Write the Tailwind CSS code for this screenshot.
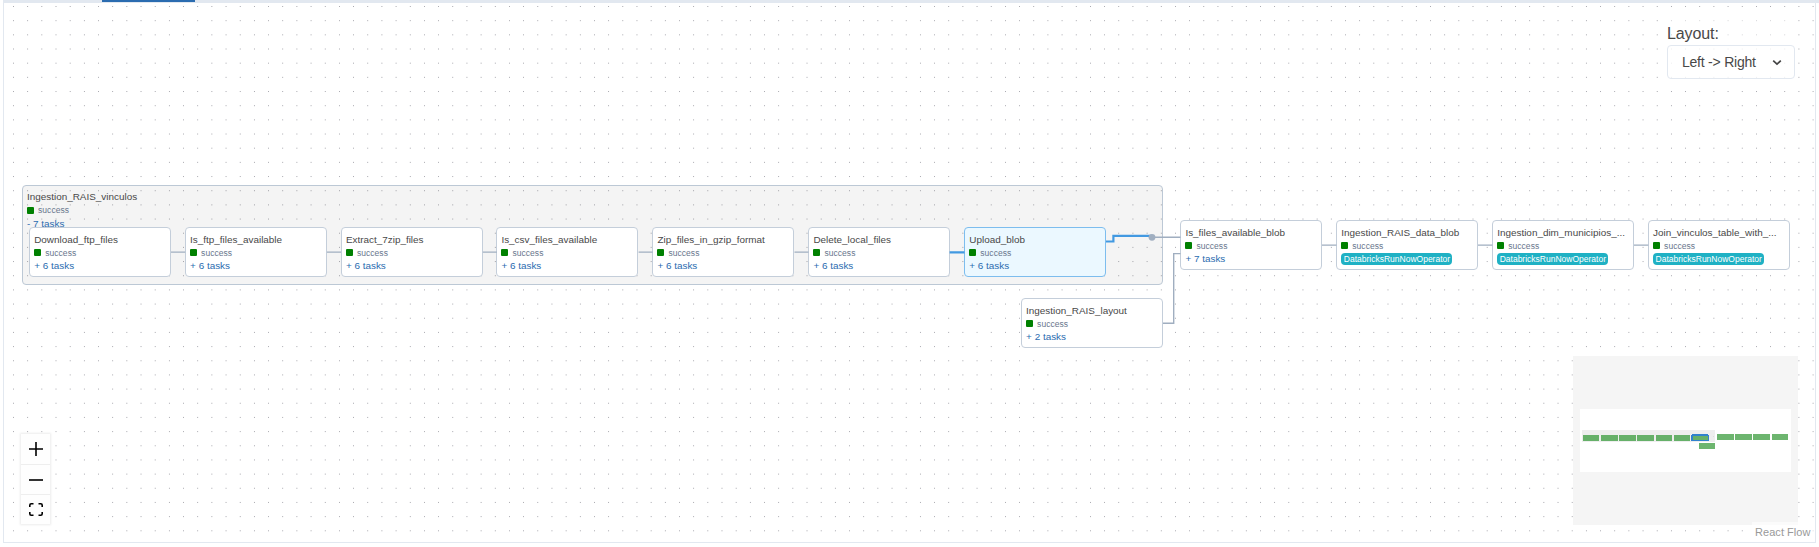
<!DOCTYPE html>
<html lang="en">
<head>
<meta charset="utf-8">
<title>Graph</title>
<script src="https://cdn.jsdelivr.net/npm/@tailwindcss/browser@4"></script>
</head>
<body class="relative w-[1819px] h-[547px] overflow-hidden bg-white font-['Liberation_Sans',Arial,sans-serif] text-[#484848]">
<div class="flex flex-col ml-[3px] w-[1816px] h-[543px]">
  <div class="h-[3px] shrink-0 bg-[#e2e8f0]"><div class="ml-[99px] w-[93px] h-[2px] bg-[#2b6cb0]"></div></div>
  <div class="w-[1813px] grow border-x border-b border-[#e2e8f0]"></div>
</div>

<svg class="absolute left-0 top-0" width="1819" height="547">
  <path id="dots" stroke="#81818a" stroke-width="0.85" stroke-linecap="round" fill="none"/>
</svg>

<div id="canvas"></div>

<svg class="absolute left-0 top-0" width="1819" height="547" fill="none" stroke="#a0aec0" stroke-width="1.4">
  <path d="M171 252.1h14.2M326.9 252.1h14.1M482.8 252.1h14M638.6 252.1h14M794.5 252.1h14M1322 245.1h14.5M1478 245.1h14.4M1634 245.1h14.3"/>
  <path d="M1152 237.2h28.5M1163 323.2h10.7v-69.6h6.8"/>
  <path d="M949.6 252.3h14.9M1106 241.5h7.4v-5.7h38.5" stroke="#4299e1" stroke-width="2.2"/>
  <circle cx="1152" cy="237.3" r="3.4" fill="#a0aec0" stroke="none"/>
</svg>

<div class="absolute left-[1667px] top-[15px] w-[128px] pt-[9px] bg-white/50">
  <div class="h-[21px] leading-[20px] text-base tracking-[-0.1px]">Layout:</div>
  <div class="flex items-center justify-between h-[34px] rounded-[4px] border border-[#e2e8f0] bg-white/60 pl-[14px] pr-[12px] text-sm tracking-[-0.23px]">
    <span>Left -&gt; Right</span>
    <svg width="10" height="7" viewBox="0 0 10 7" fill="none" stroke="#444" stroke-width="1.7"><path d="M1.2 1.7 5 5.2 8.8 1.7"/></svg>
  </div>
</div>

<div class="absolute left-[21px] top-[434px] w-[29px] flex flex-col bg-[#fefefe] shadow-[0_0_2px_1px_rgba(0,0,0,0.08)]">
  <div class="h-[31px] border-b border-[#eee] flex items-center justify-center"><svg width="14" height="14" viewBox="0 0 14 14" stroke="#000" stroke-width="1.6"><path d="M7 0v14M0 7h14"/></svg></div>
  <div class="h-[30px] border-b border-[#eee] flex items-center justify-center"><svg width="14" height="14" viewBox="0 0 14 14" stroke="#000" stroke-width="1.6"><path d="M0 7h14"/></svg></div>
  <div class="h-[29px] flex items-center justify-center"><svg width="14" height="13" viewBox="0 0 14 13" fill="none" stroke="#000" stroke-width="1.6"><path d="M.8 4V2.2Q.8.8 2.2.8H4.5M9.5.8h2.3q1.4 0 1.4 1.4V4M13.2 9v1.8q0 1.4-1.4 1.4H9.5M4.5 12.2H2.2Q.8 12.2.8 10.8V9"/></svg></div>
</div>

<svg class="absolute left-[1573px] top-[356px]" width="225" height="169" shape-rendering="crispEdges">
  <rect width="225" height="169" fill="#f5f5f5"/>
  <rect x="7" y="53" width="211" height="63" fill="#fff"/>
  <rect x="9" y="74" width="133" height="12" fill="#eee"/>
  <path fill="#66b069" d="M10 79h16v6H10zM28 79h17v6H28zM46 79h17v6H46zM64 79h17v6H64zM83 79h16v6H83zM101 79h16v6h-16z"/>
  <path fill="#3182ce" d="M119 78h16v1h1v6h-18v-6h1z"/>
  <path fill="#66b069" d="M120 80h15v4h-15z"/>
  <path fill="#6db56f" d="M126 87h16v6h-16zM144 78h17v6h-17zM162 78h17v6h-17zM180 78h17v6h-17zM199 78h16v6h-16z"/>
  <path fill="#ddd" d="M140 80h1v1h-1z"/>
</svg>
<div class="absolute left-[1752px] top-[522px] w-[63px] h-[20px] bg-white/60 pl-[3px] text-[11px] leading-[20px] tracking-[0.05px] text-[#999] whitespace-nowrap">React Flow</div>

<script>
let dots = '';
for (let row = 0; row < 38; row++)
  for (let col = 0; col < 128; col++)
    dots += `M${(13.5 + (col) * 14.17).toFixed(2)} ${(6.5 + row * 14.17).toFixed(2)}h0`;
document.getElementById('dots').setAttribute('d', dots);

const nodes = [
  [29.2, 227.3, 'Download_ftp_files', '+ 6 tasks'],
  [185.1, 227.3, 'Is_ftp_files_available', '+ 6 tasks'],
  [340.9, 227.3, 'Extract_7zip_files', '+ 6 tasks'],
  [496.4, 227.3, 'Is_csv_files_available', '+ 6 tasks'],
  [652.4, 227.3, 'Zip_files_in_gzip_format', '+ 6 tasks'],
  [808.4, 227.3, 'Delete_local_files', '+ 6 tasks'],
  [964.3, 227.3, 'Upload_blob', '+ 6 tasks'],
  [1021.1, 298, 'Ingestion_RAIS_layout', '+ 2 tasks'],
  [1180.4, 220.3, 'Is_files_available_blob', '+ 7 tasks'],
  [1336.3, 220.3, 'Ingestion_RAIS_data_blob', ''],
  [1492.2, 220.3, 'Ingestion_dim_municipios_...', ''],
  [1648.1, 220.3, 'Join_vinculos_table_with_...', '']
];
const status = '<div class="flex items-center gap-[4px] h-[12px] text-[8.5px] leading-[12px] tracking-[0.05px] text-[#68768d]"><span class="size-[7px] rounded-[1px] bg-[#008000]"></span>success</div>';
let html = `<div class="absolute left-[22px] top-[185px] w-[1141px] h-[100px] rounded-[4px] border border-[#bcc8d5] bg-black/[0.045] pl-[4px] pt-[5px] whitespace-nowrap">
  <div class="h-[13px] text-[9.92px] leading-[12px]">Ingestion_RAIS_vinculos</div>${status}
  <div class="mt-[1px] text-[9.92px] leading-[14px] text-[#2b6cb0]">- 7 tasks</div></div>`;
for (const [x, y, name, tasks] of nodes) {
  const box = name === 'Upload_blob' ? 'border-[#7dbdee] bg-[#ebf8ff]' : 'border-[#c4ceda] bg-white';
  const foot = tasks
    ? `<div class="text-[9.92px] leading-[14px] text-[#2b6cb0]">${tasks}</div>`
    : '<div class="mt-[1px] h-[12px] w-[111px] rounded-[4px] bg-[#1fb1c4] pl-[2.5px] text-[8.5px] leading-[12px] text-white">DatabricksRunNowOperator</div>';
  html += `<div style="left:${x}px;top:${y}px" class="absolute w-[142px] h-[50px] rounded-[4px] border pl-[4px] pt-[6px] whitespace-nowrap ${box}">
    <div class="h-[12.5px] text-[9.92px] leading-[12px]">${name}</div>${status}${foot}</div>`;
}
document.getElementById('canvas').innerHTML = html;
</script>
</body>
</html>
